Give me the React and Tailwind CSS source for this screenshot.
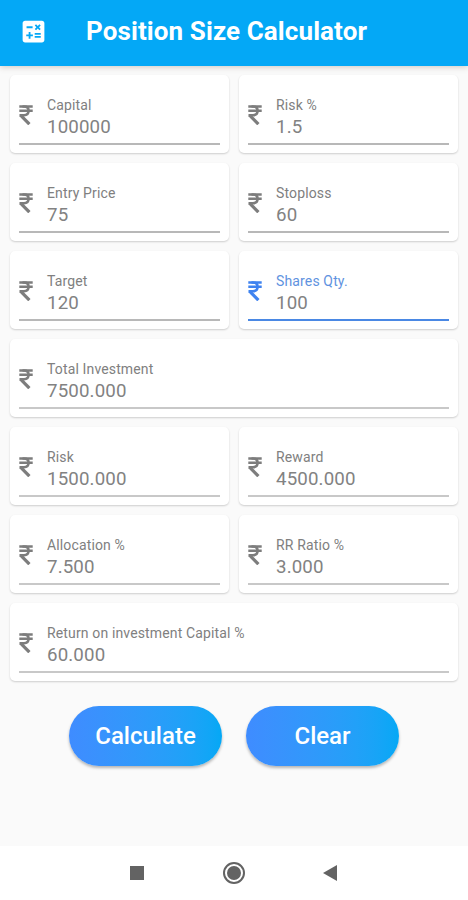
import { MdCalculate } from "react-icons/md";

const rows = [
  [{ label: "Capital", value: "100000" }, { label: "Risk %", value: "1.5" }],
  [{ label: "Entry Price", value: "75" }, { label: "Stoploss", value: "60" }],
  [{ label: "Target", value: "120" }, { label: "Shares Qty.", value: "100", active: true }],
  [{ label: "Total Investment", value: "7500.000", result: true }],
  [{ label: "Risk", value: "1500.000", result: true }, { label: "Reward", value: "4500.000", result: true }],
  [{ label: "Allocation %", value: "7.500", result: true }, { label: "RR Ratio %", value: "3.000", result: true }],
  [{ label: "Return on investment Capital %", value: "60.000", result: true }],
];

function RupeeIcon({ className }) {
  return (
    <svg className={className} viewBox="0 0 14 20" fill="none" stroke="currentColor" strokeWidth="2.5">
      <path d="M0.3 1.5H13.7M0.3 5.8H13.7" />
      <path d="M3.5 1.5H5C8 1.5 9.6 3.2 9.6 5.8C9.6 8.6 7.8 10.2 5 10.2H0.5" />
      <path d="M1.5 10.2L10.4 19.2" strokeWidth="3.2" />
    </svg>
  );
}

function Field({ label, value, active, result }) {
  const line = active
    ? "border-b-2 border-[#4a88e4]"
    : result
      ? "border-b-2 border-[#c8c8c8]"
      : "border-b-2 border-[#b8b8b8]";
  return (
    <div className="h-[78px] min-w-0 flex-1 rounded-[5px] bg-white px-[9px] pt-[20px] shadow-[0_1px_2px_rgba(0,0,0,0.18)]">
      <div className={`flex h-[50px] items-start ${line}`}>
        <RupeeIcon className={`mt-[10px] h-[20px] w-[14px] shrink-0 ${active ? "text-[#3f83f0]" : "text-[#7d7d7d]"}`} />
        <div className="ml-[14px] whitespace-nowrap">
          <div className={`h-[21px] text-[14px] leading-[20px] tracking-[0.14px] ${active ? "text-[#5f93e0]" : "text-[#808080]"}`}>
            {label}
          </div>
          <div className="h-[22px] text-[18.7px] leading-[22px] tracking-[0.14px] text-[#828282]">{value}</div>
        </div>
      </div>
    </div>
  );
}

function PillButton({ children }) {
  return (
    <button className="h-[60px] w-[153px] rounded-full bg-linear-to-r from-[#3f8cff] to-[#04a8f5] text-[24px] font-medium text-white shadow-[0_2px_3px_rgba(0,0,0,0.28)]">
      {children}
    </button>
  );
}

export default function App() {
  return (
    <div className="flex h-[900px] w-[468px] flex-col overflow-hidden bg-[#fafafa] font-['Roboto',sans-serif]">
      <header className="flex h-[66px] shrink-0 items-center bg-[#04a8f6] pb-[3px] text-white shadow-[0_1px_6px_rgba(80,60,30,0.25)]">
        <MdCalculate className="ml-[19px] size-[29px]" />
        <h1 className="ml-[38px] pb-px text-[26px] leading-[32px] font-bold tracking-[0.1px] whitespace-nowrap">Position Size Calculator</h1>
      </header>
      <main className="flex flex-1 flex-col px-[10px] pt-[9px]">
        <div className="flex flex-col gap-[10.07px]">
          {rows.map((row, i) => (
            <div key={i} className="flex gap-[10px]">
              {row.map((field) => (
                <Field key={field.label} {...field} />
              ))}
            </div>
          ))}
        </div>
        <div className="mt-[24.6px] flex justify-center gap-[24px]">
          <PillButton>Calculate</PillButton>
          <PillButton>Clear</PillButton>
        </div>
      </main>
      <nav className="flex h-[54px] shrink-0 items-center bg-white pb-px pl-[130px] text-[#636363]">
        <div className="size-[14px] bg-current" />
        <div className="ml-[79px] flex size-[22px] items-center justify-center rounded-full border-2 border-current">
          <div className="size-[14px] rounded-full bg-current" />
        </div>
        <svg className="ml-[78px] h-[16px] w-[14px]" viewBox="0 0 14 16" fill="currentColor">
          <path d="M14 0v16L0 8z" />
        </svg>
      </nav>
    </div>
  );
}
